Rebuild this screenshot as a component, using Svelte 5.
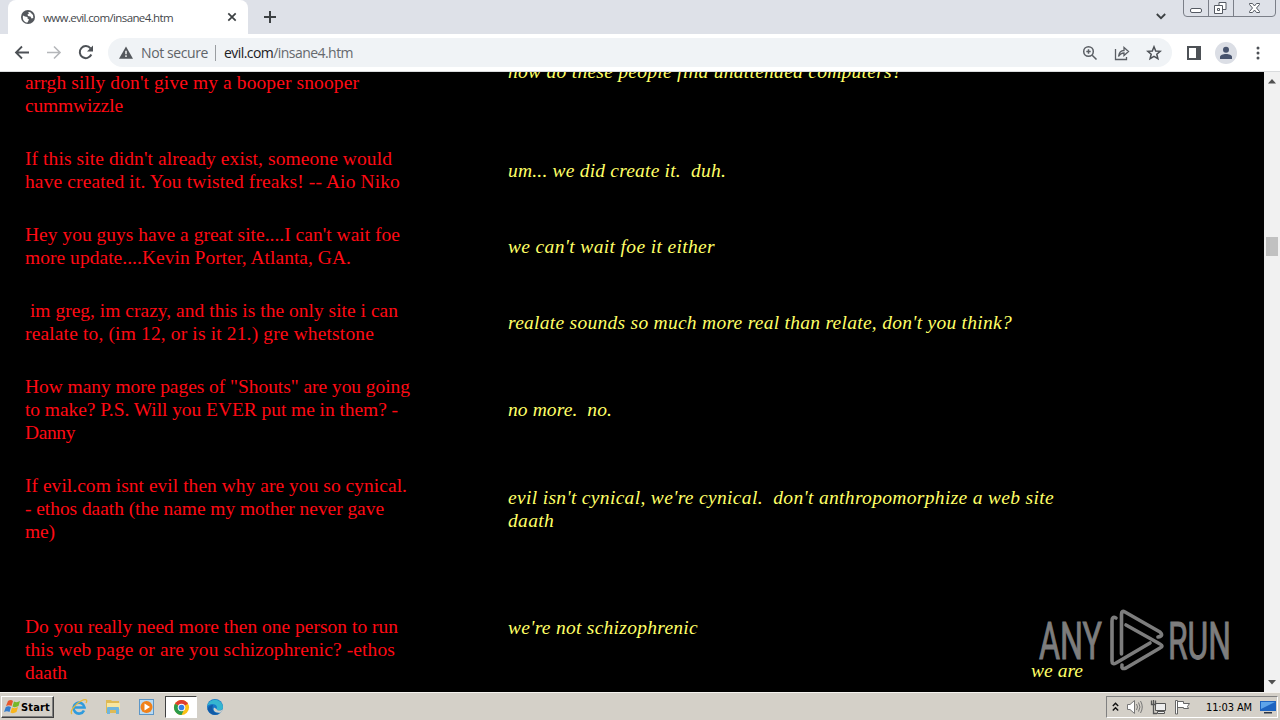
<script lang="ts">
  type Line = { text: string; width: number }
  type Shout = { lines: Line[]; reply: Line[]; gap?: number; top?: boolean; tail?: string }

  const shouts: Shout[] = [
    {
      lines: [
        { text: '\u00a0', width: 0 },
        { text: '\u00a0', width: 0 },
        { text: "arrgh silly don't give my a booper snooper", width: 334 },
        { text: 'cummwizzle', width: 98 },
      ],
      reply: [{ text: 'how do these people find unattended computers?', width: 394 }],
    },
    {
      lines: [
        { text: "If this site didn't already exist, someone would", width: 367 },
        { text: 'have created it. You twisted freaks! -- Aio Niko', width: 375 },
      ],
      reply: [{ text: 'um... we did create it.\u00a0 duh.', width: 218 }],
    },
    {
      lines: [
        { text: "Hey you guys have a great site....I can't wait foe", width: 375 },
        { text: 'more update....Kevin Porter, Atlanta, GA.', width: 326 },
      ],
      reply: [{ text: "we can't wait foe it either", width: 207 }],
    },
    {
      lines: [
        { text: '\u00a0im greg, im crazy, and this is the only site i can', width: 373 },
        { text: 'realate to, (im 12, or is it 21.) gre whetstone', width: 349 },
      ],
      reply: [{ text: "realate sounds so much more real than relate, don't you think?", width: 504 }],
    },
    {
      lines: [
        { text: 'How many more pages of "Shouts" are you going', width: 385 },
        { text: 'to make? P.S. Will you EVER put me in them? -', width: 373 },
        { text: 'Danny', width: 50 },
      ],
      reply: [{ text: 'no more.\u00a0 no.', width: 104 }],
    },
    {
      lines: [
        { text: 'If evil.com isnt evil then why are you so cynical.', width: 382 },
        { text: '- ethos daath (the name my mother never gave', width: 359 },
        { text: 'me)', width: 30 },
      ],
      reply: [
        { text: "evil isn't cynical, we're cynical.\u00a0 don't anthropomorphize a web site", width: 546 },
        { text: 'daath', width: 46 },
      ],
      gap: 72,
    },
    {
      lines: [
        { text: 'Do you really need more then one person to run', width: 373 },
        { text: 'this web page or are you schizophrenic? -ethos', width: 370 },
        { text: 'daath', width: 42 },
      ],
      reply: [{ text: "we're not schizophrenic", width: 190 }],
      top: true,
      tail: 'we are',
    },
  ]

  // spread the glyphs so that the line takes the given width
  function fit(node: HTMLElement, width: number) {
    const chars = node.textContent?.length ?? 0
    if (!width || !chars) return
    const natural = node.getBoundingClientRect().width
    node.style.letterSpacing = `${(width - natural) / chars}px`
  }
</script>

<div class="desktop">
  <header class="tabs">
    <div class="tab">
      <svg class="globe" width="14" height="14" viewBox="0 0 14 14">
        <circle cx="7" cy="7" r="7" fill="#54585d" />
        <path d="M2 5.5 4 6.5 6.5 7 6.5 8.5 8 9.5 6.5 12.6C3 12.500 1.200 9.500 2 5.500ZM7 2.200 9 2 12 5 12.300 8 10.500 8.500 9.500 6.500 7 6 6.500 4.500 8 3.500Z" fill="#fff" />
      </svg>
      <span class="tab-title"><span use:fit={130}>www.evil.com/insane4.htm</span></span>
      <svg width="10" height="10" viewBox="0 0 10 10"><path d="M1.300 1.300 8.700 8.700M8.700 1.300 1.300 8.700" stroke="#3c4043" stroke-width="1.700" /></svg>
    </div>
    <svg class="plus" width="12" height="12" viewBox="0 0 12 12"><path d="M6 0V12M0 6H12" stroke="#3c4043" stroke-width="2" /></svg>
    <svg class="chevron" width="10" height="7" viewBox="0 0 10 7"><path d="M.8 1 5 5.200 9.200 1" fill="none" stroke="#3c4043" stroke-width="1.800" /></svg>
    <svg class="controls" width="93" height="18" viewBox="0 0 93 18" fill="none" stroke="#7b7f88">
      <path d="M.5 0V13Q.5 16.500 4 16.500H89Q92.500 16.500 92.500 13V0M25.500 0V16M50.500 0V16" />
      <rect x="7.500" y="8.500" width="11" height="4" rx="1.500" fill="#fff" stroke="#555a63" />
      <path d="M35.500 3.500H42.500V10.500H35.500Z" fill="#fff" stroke="#555a63" transform="translate(0.500 -1)" />
      <path d="M31.500 5.500H39.500V13.500H31.500ZM34.500 8.500H36.500V10.500H34.500Z" fill="#fff" stroke="#555a63" />
      <path d="M66.500 3.500H69.500L71.500 6 73.500 3.500H76.500V4.500L73.500 8 76.500 11.500V12.500H73.500L71.500 10 69.500 12.500H66.500V11.500L69.500 8 66.500 4.500Z" fill="#fff" stroke="#555a63" />
    </svg>
  </header>

  <nav class="toolbar">
    <svg width="16" height="16" viewBox="0 0 16 16" fill="none" stroke="#4d5156" stroke-width="1.800"><path d="M15 7.500H2M8 1.500 2 7.500 8 13.500" /></svg>
    <svg width="16" height="16" viewBox="0 0 16 16" fill="none" stroke="#b5b7ba" stroke-width="1.600"><path d="M1 7.500H14M8 1.500 14 7.500 8 13.500" /></svg>
    <svg width="16" height="16" viewBox="0 0 16 16"><path d="M13.300 9.500A6 6 0 1 1 12.500 3.400" fill="none" stroke="#4d5156" stroke-width="2" /><path d="M15 .5V6.500H9Z" fill="#4d5156" /></svg>
    <div class="address">
      <svg class="warning" width="14" height="13" viewBox="0 0 16 14"><path d="M8 0 16 14H0Z" fill="#54585d" /><path d="M8 5V9M8 10.200V12" stroke="#fff" stroke-width="1.600" /></svg>
      <span class="secure"><span use:fit={67}>Not secure</span></span>
      <i></i>
      <span class="url"><span use:fit={129}><b>evil.com</b>/insane4.htm</span></span>
      <div class="actions">
        <svg width="16" height="16" viewBox="0 0 16 16" fill="none" stroke="#5a5e64" stroke-width="1.500"><circle cx="6.500" cy="6.500" r="4.800" /><path d="M10.200 10.200 14.500 14.500M6.500 4.300V8.700M4.300 6.500H8.700" /></svg>
        <svg width="16" height="16" viewBox="0 0 16 16" fill="none" stroke="#5a5e64" stroke-width="1.300"><path d="M1.500 4V14.500H12.500V12M4.500 11.500C5 7.500 7 5.500 10 5.500V2.500L14.500 6.500 10 10.500V8C7.500 8 6 9 4.500 11.500Z" /></svg>
        <svg width="16" height="16" viewBox="0 0 16 16" fill="none" stroke="#4d5156" stroke-width="1.500"><path d="M8 1.800 9.700 6 14.200 6.300 10.800 9.200 11.900 13.700 8 11.300 4.100 13.700 5.200 9.200 1.800 6.300 6.300 6Z" /></svg>
      </div>
    </div>
    <svg class="panel-icon" width="14" height="14" viewBox="0 0 14 14"><rect x="1" y="1" width="12" height="12" fill="none" stroke="#4d5156" stroke-width="2" /><path d="M9 1H13V13H9Z" fill="#4d5156" /></svg>
    <svg class="avatar" width="22" height="22" viewBox="0 0 22 22"><circle cx="11" cy="11" r="11" fill="#dbdee5" /><circle cx="11" cy="7.800" r="3" fill="#47536d" /><path d="M5 17V15C5 11 17 11 17 15V17Z" fill="#47536d" /></svg>
    <svg class="dots" width="4" height="14" viewBox="0 0 4 14" fill="#4d5156"><circle cx="2" cy="2" r="1.500" /><circle cx="2" cy="7" r="1.500" /><circle cx="2" cy="12" r="1.500" /></svg>
  </nav>

  <div class="view">
    <main>
      {#each shouts as shout}
        <article class:top={shout.top} style:margin-bottom="{shout.gap ?? 30}px">
          <div class="shout">
            {#each shout.lines as line}
              <p><span use:fit={line.width}>{line.text}</span></p>
            {/each}
          </div>
          <div class="reply">
            {#each shout.reply as line}
              <p><span use:fit={line.width}>{line.text}</span></p>
            {/each}
            {#if shout.tail}
              <p class="tail"><span use:fit={52}>{shout.tail}</span></p>
            {/if}
          </div>
        </article>
      {/each}
    </main>
    <aside class="scrollbar">
      <svg width="8" height="5" viewBox="0 0 8 5"><path d="M4 0 8 4.500H0Z" fill="#505050" /></svg>
      <div class="thumb"></div>
      <svg width="8" height="5" viewBox="0 0 8 5"><path d="M0 0H8L4 4.500Z" fill="#505050" /></svg>
    </aside>
    <svg class="watermark" width="194" height="64" viewBox="0 0 194 64">
      <g fill="#7d7d7d" stroke="#7d7d7d" stroke-width="1" font-family="Roboto, sans-serif" font-size="51">
        <text x="1" y="49.500" textLength="63" lengthAdjust="spacingAndGlyphs">ANY</text>
        <text x="130" y="49.500" textLength="63" lengthAdjust="spacingAndGlyphs">RUN</text>
      </g>
      <g fill="none" stroke="#7d7d7d" stroke-width="3.600" stroke-linejoin="round" stroke-linecap="round">
        <path d="M78 9Q74 7 74 12V52Q74 56 78 54L112 34" />
        <path d="M83.500 45V5Q83.500 1 87 3L122 23Q126 27 120 28" />
        <path d="M88 16 122 35Q126 37 122 39L88 59Q83 61 84 56" />
      </g>
    </svg>
  </div>

  <footer class="taskbar">
    <button class="start">
      <svg width="17" height="16" viewBox="0 0 17 16">
        <path d="M4 2Q7 0 9 2L7.500 7Q5 5.500 2 7Z" fill="#e8572c" />
        <path d="M10 2.500Q13 4 16 2L14.500 7Q11 9 8.500 7.500Z" fill="#76b82a" />
        <path d="M1.800 8Q4.500 6.500 7 8L5.500 13Q3 11.500 0 13Z" fill="#347dce" />
        <path d="M8 8.500Q11 10 14 8L12.500 13Q9 15 6.500 13.500Z" fill="#f8b51c" />
      </svg>
      <span use:fit={29}>Start</span>
    </button>
    <div class="apps">
      <span class="app">
        <svg width="18" height="18" viewBox="0 0 18 18" fill="none"><path d="M14 12.500A5.500 5.500 0 1 1 14.500 9.500H5" stroke="#2f9bdd" stroke-width="2.600" /><path d="M2 16C-1 14 5 6 11 3 16 .5 18 2 16 5" stroke="#e8b83a" stroke-width="1.300" /></svg>
      </span>
      <span class="app">
        <svg width="18" height="18" viewBox="0 0 18 18"><path d="M2 2H7L8 3H15V15H2Z" fill="#dfba55" /><path d="M3 5H16V11H3Z" fill="#f8e6a0" /><path d="M3 16V10Q3 9 4 9H14Q15 9 15 10V16H12V12H6V16Z" fill="#6fb5dd" /></svg>
      </span>
      <span class="app">
        <svg width="18" height="18" viewBox="0 0 18 18"><rect x="1.500" y="1.500" width="14" height="15" fill="#b9daf3" stroke="#5c96c7" /><circle cx="8.500" cy="9" r="6" fill="#f0811a" /><path d="M6.500 5.500 12 9 6.500 12.500Z" fill="#fff" /></svg>
      </span>
      <span class="app active">
        <svg width="17" height="17" viewBox="0 0 18 18"><circle cx="9" cy="9" r="8" fill="#fbc116" /><path d="M9 9 2.100 5A8 8 0 0 1 15.900 5Z" fill="#df3e30" /><path d="M9 9 2.100 5A8 8 0 0 0 9 17L12 10.500Z" fill="#2b9b4b" /><circle cx="9" cy="9" r="4" fill="#fff" /><circle cx="9" cy="9" r="3" fill="#357fe5" /></svg>
      </span>
      <span class="app">
        <svg width="18" height="18" viewBox="0 0 18 18"><circle cx="9" cy="9" r="8" fill="#1678c8" /><path d="M1.200 8A8 8 0 0 1 17 9C17 13 11 13.500 10.500 11 12 9 10 6 6.500 6 4 6 2 7 1.200 8Z" fill="#35b5d0" /><path d="M10.500 11C11 13 15 13 17 11L15 14.500C9 15.500 6.500 12.500 8 9.500Z" fill="#d4d0c8" /><path d="M6.500 9C6 13 9 16 13.500 15.500 9 18.500 3 16 1.500 11Q3 7 7 7Z" fill="#125aa6" /></svg>
      </span>
    </div>
    <div class="tray">
      <svg width="7" height="10" viewBox="0 0 7 10" fill="none" stroke="#111" stroke-width="1.400"><path d="M.8 4 3.500 1.300 6.200 4M.8 8.500 3.500 5.800 6.200 8.500" /></svg>
      <svg width="17" height="16" viewBox="0 0 17 16" fill="none" stroke="#777"><path d="M1.500 5.500H4L8.500 1.500V14.500L4 10.500H1.500Z" fill="#fff" /><path d="M10.500 5Q12.500 8 10.500 11M12.500 3.500Q15.500 8 12.500 12.500M14.500 2Q18 8 14.500 14" /></svg>
      <svg width="17" height="16" viewBox="0 0 17 16" fill="#eee" stroke="#555"><path d="M5.500 4.500H15.500V11.500H5.500ZM7.500 14.500H14.500V12.500H7.500Z" /><path d="M1.500 1.500V5.500H5.500V1.500M3.500 1V5M3.500 6V14.500H7" fill="none" stroke-width="1.300" /></svg>
      <svg width="17" height="16" viewBox="0 0 17 16" fill="#fff" stroke="#666"><path d="M1.500 1.500H3.500V15H1.500ZM3.500 2.500H9.500V4.500H15.500L13.500 7.500 14.500 9.500H9.500V8.500H3.500Z" /></svg>
      <span class="clock"><span use:fit={46}>11:03 AM</span></span>
      <svg width="16" height="14" viewBox="0 0 16 14"><path d="M0 1H16V11H0Z" fill="#1d64c0" /><path d="M1 2H15L1 9Z" fill="#5da4ea" /><path d="M4 12H12V13.500H4Z" fill="#2a3546" /></svg>
    </div>
  </footer>
</div>

<style>
  .desktop {
    display: flex;
    flex-direction: column;
    width: 1280px;
    height: 720px;
    overflow: hidden;
    font-family: 'DejaVu Sans Condensed', 'DejaVu Sans', sans-serif;
  }

  svg {
    display: block;
    flex: none;
  }

  span {
    white-space: nowrap;
  }

  .tabs {
    display: flex;
    flex: none;
    height: 34px;
    background: #dee1e8;
  }

  .tab {
    display: flex;
    align-items: center;
    box-sizing: border-box;
    width: 240px;
    margin-left: 8px;
    padding: 0 11px 0 13px;
    border-radius: 8px 8px 0 0;
    background: #fff;
  }

  .tab-title {
    flex: 1;
    margin-left: 8px;
    color: #45484c;
    font-family: 'Open Sans', sans-serif;
    font-size: 11.5px;
  }

  .plus {
    margin: 11px auto 0 16px;
  }

  .chevron {
    margin: 13px 17px 0 0;
  }

  .controls {
    margin-right: 4px;
  }

  .toolbar {
    display: flex;
    flex: none;
    align-items: center;
    box-sizing: border-box;
    height: 38px;
    padding: 0 20px 0 14px;
    border-bottom: 1px solid #d9dbdd;
    background: #fff;
    gap: 16px;
  }

  .address {
    display: flex;
    flex: 1;
    align-items: center;
    height: 29px;
    margin-left: -2px;
    padding: 0 10px 0 11px;
    border-radius: 15px;
    background: #f0f3f6;
    font-family: 'Open Sans', sans-serif;
    font-size: 14px;
  }

  .secure {
    width: 74px;
    margin-left: 8px;
    color: #606469;
  }

  .address i {
    width: 1px;
    height: 16px;
    background: #9a9da1;
  }

  .url {
    margin-left: 8px;
    color: #66696e;
  }

  .url b {
    color: #202124;
    font-weight: 400;
  }

  .actions {
    display: flex;
    gap: 16px;
    margin-left: auto;
  }

  .panel-icon {
    margin-left: -1px;
  }

  .avatar {
    margin: 0 3px 0 -2px;
  }

  .view {
    position: relative;
    display: flex;
    flex: none;
    height: 620px;
    overflow: hidden;
    background: #000;
  }

  main {
    width: 1264px;
    margin-top: -47px;
    font-family: 'Liberation Serif', serif;
    font-size: 19.5px;
    line-height: 23px;
  }

  article {
    display: grid;
    grid-template-columns: 483px 575px;
    align-items: center;
    padding-left: 25px;
  }

  article.top {
    align-items: start;
  }

  p {
    margin: 0;
    white-space: pre;
  }

  .shout {
    color: #ff0a14;
  }

  .reply {
    color: #ffff66;
    font-style: italic;
  }

  .top .reply {
    padding-top: 1px;
  }

  .tail {
    margin-top: 20px;
    text-align: right;
  }

  .scrollbar {
    display: flex;
    flex-direction: column;
    align-items: center;
    box-sizing: border-box;
    width: 16px;
    padding: 7px 0;
    background: #f1f1f1;
  }

  .thumb {
    width: 12px;
    height: 19px;
    margin: 153px 0 auto;
    background: #c1c1c1;
  }

  .watermark {
    position: absolute;
    top: 537px;
    left: 1038px;
  }

  .taskbar {
    display: flex;
    flex: none;
    align-items: center;
    box-sizing: border-box;
    height: 28px;
    padding: 1px 2px 0 1px;
    border-top: 1px solid #f4f2ee;
    background: #d4d0c8;
  }

  .start {
    display: flex;
    align-items: center;
    box-sizing: border-box;
    width: 53px;
    height: 22px;
    padding: 0 1px 0 2px;
    border: 1px solid;
    border-color: #fff #404040 #404040 #fff;
    background: #d4d0c8;
    box-shadow: inset -1px -1px #808080;
    color: #000;
    font: bold 11px 'DejaVu Sans Condensed', sans-serif;
  }

  .apps {
    display: flex;
    margin-left: 9px;
    gap: 2px;
  }

  .app {
    display: grid;
    place-items: center;
    box-sizing: border-box;
    width: 32px;
    height: 22px;
  }

  .active {
    border: 1px solid;
    border-color: #404040 #fff #fff #404040;
    background: #fff;
  }

  .tray {
    display: flex;
    align-items: center;
    box-sizing: border-box;
    width: 172px;
    height: 22px;
    margin-left: auto;
    padding: 0 1px 0 5px;
    border: 1px solid;
    border-color: #808080 #fff #fff #808080;
    gap: 7px;
  }

  .clock {
    width: 47px;
    margin-left: 8px;
    color: #000;
    font-size: 11px;
  }
</style>
